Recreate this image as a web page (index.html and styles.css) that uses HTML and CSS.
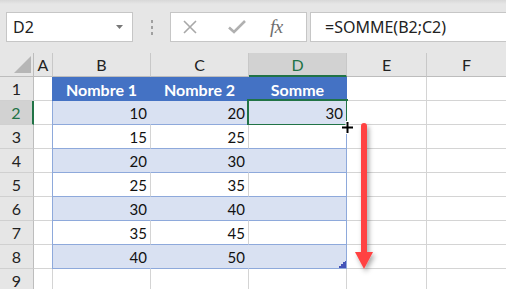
FILE: index.html
```html
<!DOCTYPE html>
<html>
<head>
<meta charset="utf-8">
<link rel="stylesheet" href="styles.css">
</head>
<body>
<div class="toolbar">
  <div class="namebox">
    <span class="name">D2</span>
    <svg class="dd" width="7" height="4" viewBox="0 0 7 4"><polygon points="0,0 7,0 3.5,4" fill="#777"/></svg>
  </div>
  <div class="sep"><i></i><i></i><i></i></div>
  <div class="fbtns">
    <svg class="ico" width="14" height="14" viewBox="0 0 14 14"><path d="M1 1 L13 13 M13 1 L1 13" stroke="#a8a8a8" stroke-width="1.6" fill="none"/></svg>
    <svg class="ico chk" width="18" height="14" viewBox="0 0 18 14"><path d="M1 7.5 L6 12 L17 1" stroke="#b0b0b0" stroke-width="2.6" fill="none"/></svg>
    <span class="fx">fx</span>
  </div>
  <div class="formula">=SOMME(B2;C2)</div>
</div>
<div class="sheet">
  <div class="h corner"><svg width="17" height="17" viewBox="0 0 17 17"><polygon points="0,17 17,17 17,0" fill="#b6b6b6"/></svg></div>
  <div class="h col">A</div>
  <div class="h col">B</div>
  <div class="h col">C</div>
  <div class="h col sel">D</div>
  <div class="h col">E</div>
  <div class="h col">F</div>

  <div class="h row">1</div>
  <div class="c"></div>
  <div class="c th tl">Nombre 1</div>
  <div class="c th">Nombre 2</div>
  <div class="c th tr">Somme</div>
  <div class="c"></div>
  <div class="c"></div>

  <div class="h row rsel">2</div>
  <div class="c"></div>
  <div class="c n band tl">10</div>
  <div class="c n band">20</div>
  <div class="c n band tr active">30</div>
  <div class="c"></div>
  <div class="c"></div>

  <div class="h row">3</div>
  <div class="c"></div>
  <div class="c n plain tl">15</div>
  <div class="c n plain">25</div>
  <div class="c n plain tr"></div>
  <div class="c"></div>
  <div class="c"></div>

  <div class="h row">4</div>
  <div class="c"></div>
  <div class="c n band tl">20</div>
  <div class="c n band">30</div>
  <div class="c n band tr"></div>
  <div class="c"></div>
  <div class="c"></div>

  <div class="h row">5</div>
  <div class="c"></div>
  <div class="c n plain tl">25</div>
  <div class="c n plain">35</div>
  <div class="c n plain tr"></div>
  <div class="c"></div>
  <div class="c"></div>

  <div class="h row">6</div>
  <div class="c"></div>
  <div class="c n band tl">30</div>
  <div class="c n band">40</div>
  <div class="c n band tr"></div>
  <div class="c"></div>
  <div class="c"></div>

  <div class="h row">7</div>
  <div class="c"></div>
  <div class="c n plain tl">35</div>
  <div class="c n plain">45</div>
  <div class="c n plain tr"></div>
  <div class="c"></div>
  <div class="c"></div>

  <div class="h row">8</div>
  <div class="c"></div>
  <div class="c n band tl">40</div>
  <div class="c n band">50</div>
  <div class="c n band tr last"><svg class="handle" width="7" height="7" viewBox="0 0 7 7"><polygon points="7,0 7,7 0,7 0,5 2,5 2,3 4,3 4,1 6,1 6,0" fill="#4454b8"/></svg></div>
  <div class="c"></div>
  <div class="c"></div>

  <div class="h row">9</div>
  <div class="c"></div>
  <div class="c"></div>
  <div class="c"></div>
  <div class="c"></div>
  <div class="c"></div>
  <div class="c"></div>
</div>
<svg class="cursor" width="15" height="15" viewBox="0 0 15 15">
  <path d="M7.5 1 V14 M1 7.5 H14" stroke="#fff" stroke-width="4"/>
  <path d="M7.5 2 V13 M2 7.5 H13" stroke="#000" stroke-width="2"/>
</svg>
<svg class="arrow" width="40" height="170" viewBox="0 0 40 170">
  <defs>
    <filter id="sh" x="-50%" y="-20%" width="200%" height="140%">
      <feDropShadow dx="2" dy="3" stdDeviation="2.5" flood-color="#000" flood-opacity="0.35"/>
    </filter>
  </defs>
  <g filter="url(#sh)" fill="#ff4343">
    <rect x="11" y="5" width="6" height="132" rx="3"/>
    <polygon points="5,134 23,134 14,151"/>
  </g>
</svg>
</body>
</html>
```
FILE: styles.css
```css
html, body {
  margin: 0;
  padding: 0;
  background: #ffffff;
  overflow: hidden;
}
body {
  width: 506px;
  height: 289px;
  position: relative;
  font-family: "Lato", "Liberation Sans", sans-serif;
}
.toolbar {
  height: 53px;
  box-sizing: border-box;
  background: linear-gradient(#d8d8d8 0px, #e6e6e6 4px, #e6e6e6 100%);
  display: flex;
  align-items: flex-start;
  padding-top: 12px;
  padding-left: 6px;
}
.namebox {
  width: 127px;
  height: 30px;
  box-sizing: border-box;
  background: #fff;
  border: 1px solid #c6c6c6;
  display: flex;
  align-items: center;
  justify-content: space-between;
  padding: 0 9px 0 6px;
}
.name {
  font-family: "Noto Sans", "Open Sans", sans-serif;
  font-size: 16px;
  color: #222;
}
.sep {
  width: 37px;
  height: 30px;
  display: flex;
  flex-direction: column;
  align-items: center;
  justify-content: center;
  gap: 3px;
}
.sep i {
  display: block;
  width: 2px;
  height: 3px;
  background: #a0a0a0;
}
.fbtns {
  width: 137px;
  height: 30px;
  box-sizing: border-box;
  background: #fff;
  border: 1px solid #c6c6c6;
  display: flex;
  align-items: center;
  padding-left: 12px;
}
.ico {
  display: block;
}
.chk {
  margin-left: 31px;
}
.fx {
  margin-left: 24px;
  font-family: "Liberation Serif", "DejaVu Serif", serif;
  font-style: italic;
  font-size: 19px;
  color: #6e6e6e;
  letter-spacing: -0.5px;
}
.formula {
  margin-left: 3px;
  flex: 1;
  height: 30px;
  box-sizing: border-box;
  background: #fff;
  border: 1px solid #c6c6c6;
  border-right: none;
  font-family: "Noto Sans", "Open Sans", sans-serif;
  font-size: 16px;
  color: #222;
  line-height: 28px;
  padding-left: 14px;
}
.sheet {
  display: grid;
  grid-template-columns: 34px 19px 98px 98px 98px 80px 80px;
  grid-template-rows: repeat(10, 24px);
  font-size: 15px;
  color: #111;
}
.h {
  background: #e6e6e6;
  box-sizing: border-box;
  display: flex;
  align-items: center;
  justify-content: center;
  color: #222;
  font-size: 16px;
}
.corner {
  border-right: 1px solid #bdbdbd;
  border-bottom: 1px solid #bdbdbd;
  align-items: flex-end;
  justify-content: flex-end;
  padding: 0 2px 3px 0;
}
.corner svg {
  display: block;
}
.col {
  border-right: 1px solid #c8c8c8;
  border-bottom: 1px solid #bdbdbd;
}
.col.sel {
  background: #d2d2d2;
  color: #217346;
  border-bottom: 2px solid #217346;
}
.row {
  border-right: 1px solid #bdbdbd;
  border-bottom: 1px solid #d0d0d0;
}
.row.rsel {
  background: #d2d2d2;
  color: #217346;
  border-right: 2px solid #217346;
}
.c {
  box-sizing: border-box;
  border-right: 1px solid #d4d4d4;
  border-bottom: 1px solid #d4d4d4;
  background: #fff;
  position: relative;
}
.th {
  background: #4472c4;
  color: #fff;
  font-weight: bold;
  font-size: 16px;
  display: flex;
  align-items: center;
  justify-content: center;
  border-right-color: #4472c4;
  border-bottom-color: #4472c4;
  padding-top: 1px;
}
.n {
  display: flex;
  align-items: center;
  justify-content: flex-end;
  padding-right: 3px;
  padding-top: 1px;
  border-bottom-color: #8ea9db;
}
.band {
  background: #d9e1f2;
  border-right-color: #d9e1f2;
}
.tl {
  border-left: 1px solid #8ea9db;
  margin-left: -1px;
}
.th.tl {
  border-left: 1px solid #4472c4;
}
.tr {
  border-right: 1px solid #8ea9db;
}
.th.tr {
  border-right: 1px solid #4472c4;
}
.active::after {
  content: "";
  position: absolute;
  left: -2px;
  top: -2px;
  right: -2px;
  bottom: -2px;
  border: 2px solid #217346;
}
.handle {
  position: absolute;
  right: 0;
  bottom: 0;
  display: block;
}
.cursor {
  position: absolute;
  left: 340px;
  top: 120px;
}
.arrow {
  position: absolute;
  left: 350px;
  top: 118px;
}
```
